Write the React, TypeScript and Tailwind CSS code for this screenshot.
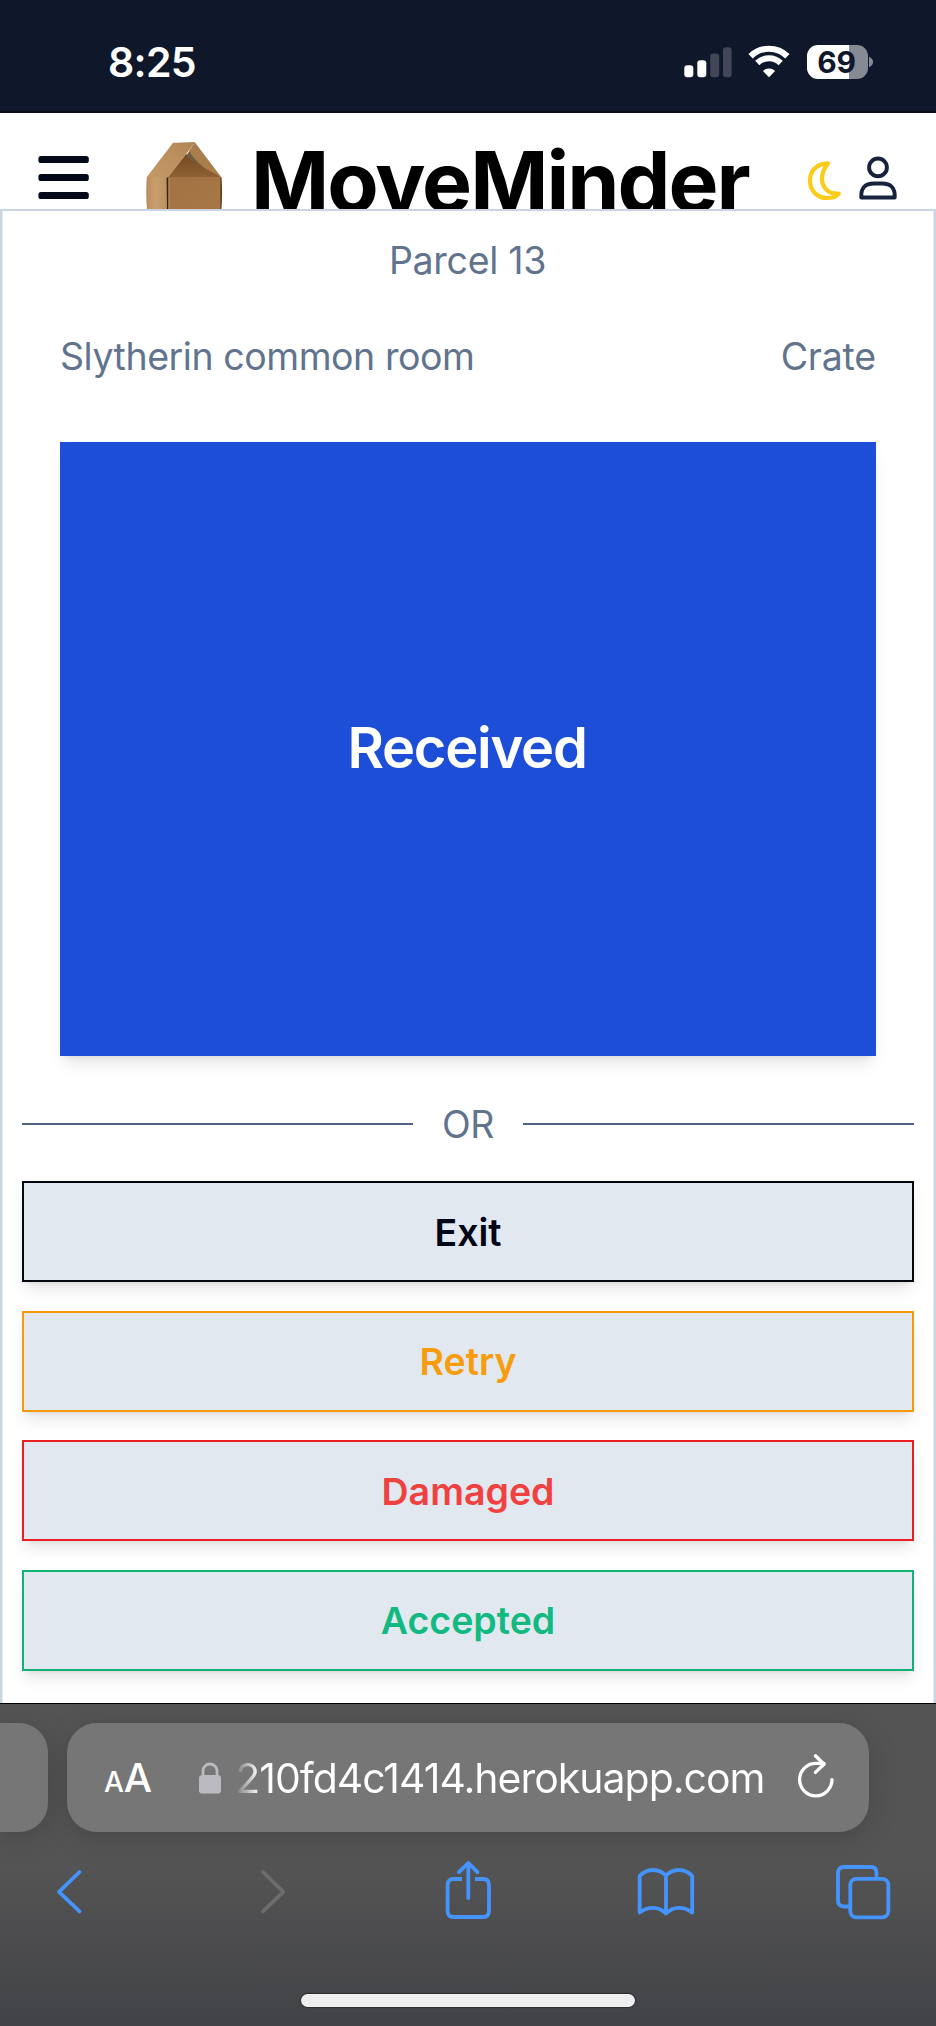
import React from "react";

const actions = [
  { label: "Exit", box: "border-[#06080f]", text: "text-[#020617]" },
  { label: "Retry", box: "border-[#f8990b]", text: "text-[#f79d0d]" },
  { label: "Damaged", box: "border-[#ea2020]", text: "text-[#f04141]" },
  { label: "Accepted", box: "border-[#12b174]", text: "text-[#12b981]" },
];

function StatusBar() {
  return (
    <div className="flex h-[113px] shrink-0 items-center border-b-2 border-[#0b0d16] bg-[#0f172a] pt-[13px] pl-[108px] pr-[63px]">
      <span className="text-[41px] leading-[48px] font-semibold tracking-[-0.7px] text-white">8:25</span>
      <div className="ml-auto flex items-center">
        <svg width="48" height="34" viewBox="0 0 48 34" fill="#fff">
          <rect x="0.3" y="20.3" width="9" height="12" rx="3" />
          <rect x="13.3" y="15.3" width="9" height="17" rx="3" />
          <rect x="26.2" y="8.5" width="9" height="23.8" rx="3" fill="#424757" />
          <rect x="39" y="2.3" width="8.6" height="30" rx="3" fill="#424757" />
        </svg>
        <svg className="ml-[16px]" width="42" height="34" viewBox="0 0 42 34" fill="none" stroke="#fff">
          <path d="M2.6 11.2 A26.5 26.5 0 0 1 39.4 11.2" strokeWidth="6.2" />
          <path d="M9.3 18 A16.6 16.6 0 0 1 32.7 18" strokeWidth="6" />
          <path d="M21 32.3 L14.9 26 A8.8 8.8 0 0 1 27.1 26 Z" fill="#fff" stroke="none" />
        </svg>
        <div className="ml-[17px] flex items-center">
          <div className="flex h-[34px] w-[61px] items-center justify-center rounded-[11px] bg-linear-to-r from-white from-[69%] to-[#868a94] to-[69%] pr-[2px] text-[30px] leading-[34px] font-bold tracking-[-0.3px] text-[#0f172a]">
            69
          </div>
          <svg className="ml-[1px]" width="4" height="12" viewBox="0 0 4 12">
            <path d="M0 0.8 Q4 2.5 4 6 Q4 9.5 0 11.2 Z" fill="#868a94" />
          </svg>
        </div>
      </div>
    </div>
  );
}

function BoxLogo() {
  return (
    <svg className="ml-[57px]" width="78" height="68" viewBox="0 0 78 68">
      <defs>
        <linearGradient id="flap" x1="0" y1="1" x2="1" y2="0">
          <stop offset="0" stopColor="#c49a68" />
          <stop offset="0.6" stopColor="#bb8f5e" />
          <stop offset="1" stopColor="#b28553" />
        </linearGradient>
        <linearGradient id="front" x1="0" y1="0" x2="1" y2="1">
          <stop offset="0" stopColor="#a27242" />
          <stop offset="1" stopColor="#a87748" />
        </linearGradient>
        <linearGradient id="side" x1="0" y1="0" x2="1" y2="0">
          <stop offset="0" stopColor="#b98c5c" />
          <stop offset="0.4" stopColor="#c99e6e" />
          <stop offset="1" stopColor="#bd915f" />
        </linearGradient>
        <linearGradient id="inner" x1="0" y1="0" x2="0" y2="1">
          <stop offset="0" stopColor="#75491f" />
          <stop offset="1" stopColor="#8f6034" />
        </linearGradient>
      </defs>
      <path d="M0.8 35 L22 35 L22 68 L1 68 Q-0.4 52 0.8 35Z" fill="url(#side)" />
      <path d="M22 35 L75 35 L75 68 L22 68Z" fill="url(#front)" />
      <path d="M20.6 35 L22.4 35 L22.4 68 L21 68Z" fill="#332114" />
      <path d="M22.6 36 L23.4 36 L23.4 68 L22.6 68Z" fill="#c99d6c" />
      <path d="M74.4 35.3 L75.6 35.3 Q76.6 52 75.4 68 L74.4 68Z" fill="#64391c" />
      <path d="M22 35 L40 12 Q56 21 75 35Z" fill="url(#inner)" />
      <path d="M40 14 L49 1 L68 31 Q53 24 40 14Z" fill="#6f5d42" />
      <path d="M49 0.6 L75.2 35 L60 27 Q49 19 43 9Z" fill="#aa7d4c" />
      <path d="M0.8 35 L26.7 1.3 L49 0.4 L22 35.4Z" fill="url(#flap)" />
      <path d="M26.7 1.3 L49 0.4" stroke="#a88355" strokeWidth="0.8" />
    </svg>
  );
}

function Header() {
  return (
    <div className="flex h-[96px] shrink-0 items-start overflow-hidden bg-white pl-[38px] pr-[38px]">
      <svg className="mt-[42px] shrink-0" width="51" height="45" viewBox="0 0 51 45" fill="#04091a">
        <rect x="0.4" y="1" width="50.4" height="7" rx="2.6" />
        <rect x="0.4" y="19" width="50.4" height="7" rx="2.6" />
        <rect x="0.4" y="37" width="50.4" height="7" rx="2.6" />
      </svg>
      <div className="mt-[29px] shrink-0">
        <BoxLogo />
      </div>
      <h1 className="mt-[19px] ml-[27px] text-[84px] leading-[100px] font-bold tracking-[-2px] text-black">
        MoveMinder
      </h1>
      <div className="mt-[42px] ml-auto flex shrink-0 items-start">
        <svg width="34" height="46" viewBox="0 0 34 46" fill="none" stroke="#facc15" strokeWidth="4.2" strokeLinejoin="round">
          <path d="M20 8.3 C8 8.2 2 17 2 25.5 C2 36.5 10 43 19 43 C25 43 29 40.6 30.6 38.6 C15.5 39.8 8 24 20 8.3 Z" />
        </svg>
        <svg className="ml-[16px]" width="40" height="46" viewBox="0 0 40 46" fill="none" stroke="#17233c" strokeWidth="3.9">
          <circle cx="20" cy="12.4" r="8.9" />
          <path d="M3.3 42.5 H36.7 Q37.6 28.5 24 28.5 H16 Q2.4 28.5 3.3 42.5 Z" strokeLinejoin="round" />
        </svg>
      </div>
    </div>
  );
}

function Parcel() {
  return (
    <main className="flex h-[1494px] shrink-0 flex-col overflow-hidden border-x-2 border-t-2 border-[#cbd5e1] bg-white px-[20px] text-[37.5px] leading-[48px] text-[#61738d] shadow-[inset_1px_0_#e6ebf2,inset_-1px_0_#e6ebf2]">
      <p className="mt-[26px] pr-[1px] text-center tracking-[-0.3px]">Parcel 13</p>
      <div className="mt-[48px] flex justify-between px-[38px]">
        <span className="tracking-[-0.45px]">Slytherin common room</span>
        <span className="tracking-[-0.2px]">Crate</span>
      </div>
      <button className="mx-[38px] mt-[61px] h-[614px] shrink-0 bg-[#1d4ed8] pr-[2px] pb-[2px] text-[56px] font-semibold tracking-[-1.25px] text-white shadow-[0_10px_15px_-3px_rgba(0,0,0,0.1),0_4px_6px_-4px_rgba(0,0,0,0.1)]">
        Received
      </button>
      <div className="mt-[44px] flex h-[48px] items-center gap-[29px]">
        <div className="h-[2px] flex-1 bg-[#4f627f]" />
        <span className="pt-[2px] tracking-[-0.3px]">OR</span>
        <div className="h-[2px] flex-1 bg-[#4f627f]" />
      </div>
      <div className="mt-[33px] flex flex-col gap-[28.6px]">
        {actions.map((a) => (
          <button
            key={a.label}
            className={`h-[101px] border-2 bg-[#e2e8f0] pt-[2px] text-[37.5px] font-semibold shadow-[0_10px_15px_-3px_rgba(0,0,0,0.1),0_4px_6px_-4px_rgba(0,0,0,0.1)] ${a.box} ${a.text}`}
          >
            {a.label}
          </button>
        ))}
      </div>
    </main>
  );
}

function BrowserBar() {
  return (
    <div className="flex h-[323px] shrink-0 flex-col overflow-hidden border-t border-black bg-linear-to-b from-[#545454] from-50% to-[#424347]">
      <div className="mt-[19px] flex h-[109px] shrink-0 gap-[19px]">
        <div className="w-[48px] rounded-r-[29px] bg-[#767676] shadow-[0_6px_30px_rgba(0,0,0,0.15)]" />
        <div className="flex w-[802px] items-center rounded-[30px] bg-[#767676] pl-[37px] text-[41px] leading-[50px] text-white shadow-[0_6px_30px_rgba(0,0,0,0.15)]">
          <span className="flex items-baseline pt-[5px] font-medium">
            <span className="text-[28px]">A</span>
            <span className="text-[40px]">A</span>
          </span>
          <svg className="ml-[46px]" width="24" height="34" viewBox="0 0 24 34">
            <path d="M5 15 V10 A7 7 0 0 1 19 10 V15" fill="none" stroke="#bbbac1" strokeWidth="2.8" />
            <rect x="1" y="14" width="22" height="18.6" rx="3.4" fill="#bbbac1" />
          </svg>
          <span className="ml-[13px] bg-linear-to-r from-[#777777] to-white to-[24px] bg-clip-text pt-[1px] tracking-[-1px] text-transparent">
            210fd4c1414.herokuapp.com
          </span>
          <svg className="mr-[34px] mb-[4px] ml-auto" width="38" height="46" viewBox="0 0 38 46" fill="none" stroke="#fff" strokeWidth="3.3" strokeLinecap="round" strokeLinejoin="round">
            <path d="M35 26.6 A16.2 16.2 0 1 1 18.8 10.4 H27" />
            <path d="M18.4 2.8 L27 11.2 L18.4 19.4" />
          </svg>
        </div>
      </div>
      <div className="mt-[28px] flex h-[62px] shrink-0 items-start pl-[56px]">
        <svg className="mt-[9px]" width="28" height="46" viewBox="0 0 28 46" fill="none" stroke="#4593fd" strokeWidth="3.8" strokeLinecap="round" strokeLinejoin="round">
          <path d="M23.5 3 L3 22.8 L23.5 42.4" />
        </svg>
        <svg className="mt-[9px] ml-[175px]" width="28" height="46" viewBox="0 0 28 46" fill="none" stroke="#6c6c6c" strokeWidth="3.8" strokeLinecap="round" strokeLinejoin="round">
          <path d="M4 3 L24.3 22.8 L4 42.4" />
        </svg>
        <svg className="ml-[157px]" width="48" height="60" viewBox="0 0 48 60" fill="none" stroke="#4593fd" strokeWidth="3.8" strokeLinejoin="round">
          <path d="M18 19 H9.5 Q3.6 19 3.6 25 V51 Q3.6 57 9.5 57 H39 Q45 57 45 51 V25 Q45 19 39 19 H31" />
          <path d="M24.3 38 V3 M15 12.2 L24.3 3 L33.5 12.2" strokeLinecap="round" />
        </svg>
        <svg className="mt-[7px] ml-[144px]" width="60" height="52" viewBox="0 0 60 52" fill="none" stroke="#4593fd" strokeWidth="3.8" strokeLinecap="round" strokeLinejoin="round">
          <path d="M30 8.5 Q24.5 3 17 3 Q9.5 3 3.7 9 V45.5 Q9.5 40.8 17 40.8 Q24.5 40.8 30 46.5 Q35.5 40.8 43 40.8 Q50.5 40.8 56.2 45.5 V9 Q50.5 3 43 3 Q35.5 3 30 8.5 V46.5" />
        </svg>
        <svg className="mt-[4px] ml-[139px]" width="56" height="56" viewBox="0 0 56 56" fill="none" stroke="#4593fd" strokeWidth="3.8">
          <path d="M14.5 42.5 H9 Q3 42.5 3 36.5 V9 Q3 3 9 3 H36 Q41.5 3 41.5 9 V14" />
          <rect x="15.3" y="14.8" width="38" height="38.5" rx="6" />
        </svg>
      </div>
      <div className="mx-auto mt-[72px] h-[13px] w-[334px] shrink-0 rounded-full bg-[#eeeeee] shadow-[0_0_1px_1px_rgba(0,0,0,0.35)]" />
    </div>
  );
}

export default function App() {
  return (
    <div className="flex h-[2026px] w-[936px] flex-col overflow-hidden bg-white font-['Inter','Liberation_Sans',sans-serif]">
      <StatusBar />
      <Header />
      <Parcel />
      <BrowserBar />
    </div>
  );
}
